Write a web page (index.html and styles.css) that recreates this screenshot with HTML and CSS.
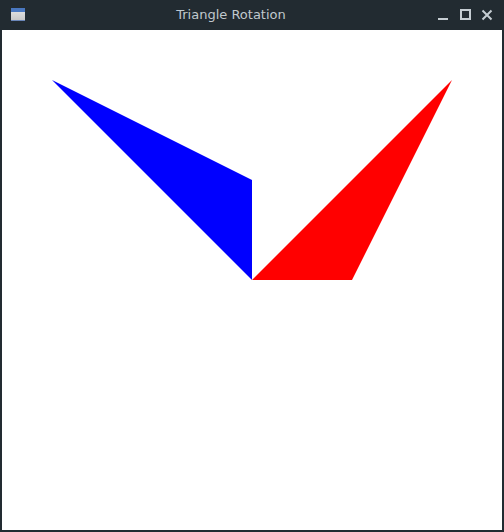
FILE: index.html
```html
<!DOCTYPE html>
<html>
<head>
<meta charset="utf-8">
<title>Triangle Rotation</title>
<link rel="stylesheet" href="styles.css">
</head>
<body>
<div class="window">
  <div class="titlebar">
    <div class="app-icon"><div class="app-icon-top"></div></div>
    <div class="title">Triangle Rotation</div>
    <div class="controls">
      <svg class="ctl" width="12" height="12" viewBox="0 0 12 12"><rect x="1" y="9" width="10" height="2" fill="#c5cdd2"/></svg>
      <svg class="ctl" width="12" height="12" viewBox="0 0 12 12"><rect x="2" y="1" width="9" height="9" fill="none" stroke="#c5cdd2" stroke-width="2"/></svg>
      <svg class="ctl" width="12" height="12" viewBox="0 0 12 12"><path d="M1.5 1.5 L10.5 10.5 M10.5 1.5 L1.5 10.5" stroke="#c5cdd2" stroke-width="2"/></svg>
    </div>
  </div>
  <div class="canvas">
    <svg width="500" height="500" viewBox="0 0 500 500">
      <polygon points="50,50 250,150 250,250" fill="#0000ff"/>
      <polygon points="450,50 250,250 350,250" fill="#ff0000"/>
    </svg>
  </div>
</div>
</body>
</html>
```
FILE: styles.css
```css
html, body {
  margin: 0;
  padding: 0;
  background: #222b31;
}
.window {
  width: 504px;
  height: 532px;
  background: #222b31;
  display: flex;
  flex-direction: column;
  font-family: "DejaVu Sans", sans-serif;
}
.titlebar {
  height: 30px;
  display: flex;
  align-items: center;
  position: relative;
  color: #c0c8cd;
}
.app-icon {
  width: 14px;
  height: 13px;
  margin-left: 11px;
  margin-top: -1px;
  background: linear-gradient(#e8e8e8, #c8c8c8);
  border-bottom: 1px solid #6a86b8;
  box-sizing: border-box;
  display: flex;
  flex-direction: column;
}
.app-icon-top {
  height: 4px;
  background: #4a78c0;
}
.title {
  position: absolute;
  left: 0;
  right: 0;
  text-align: center;
  font-size: 13px;
  top: 7px;
  padding-right: 42px;
}
.controls {
  margin-left: auto;
  margin-right: 11px;
  display: flex;
  gap: 10px;
  margin-top: 0;
}
.ctl {
  display: block;
}
.canvas {
  margin: 0 2px 2px 2px;
  height: 500px;
  background: #ffffff;
}
.canvas svg {
  display: block;
}
```
